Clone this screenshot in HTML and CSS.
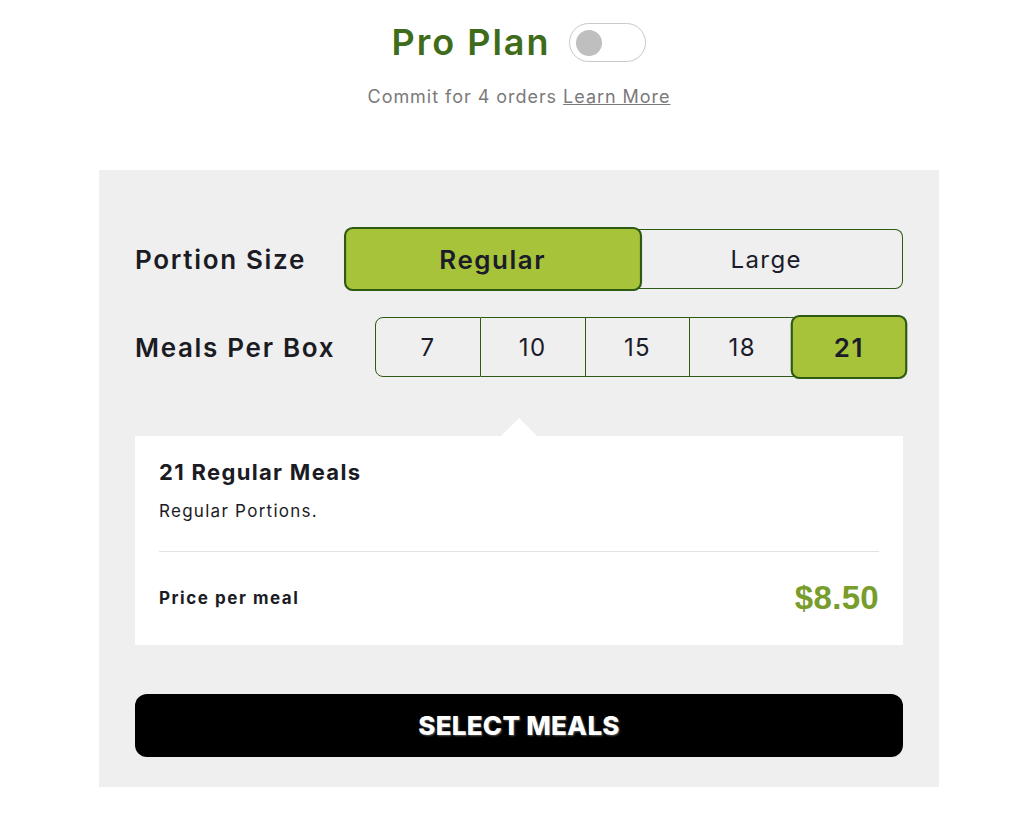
FILE: index.html
```html
<!DOCTYPE html>
<html lang="en">
<head>
  <meta charset="UTF-8">
  <meta name="viewport" content="width=device-width, initial-scale=1">
  <title>Choose Your Plan</title>
  <link rel="stylesheet" href="styles.css">
</head>

<body>

  <div class="cabecera">
    <div class="fila-titulo">
      <h1>Pro Plan</h1>
      <label class="interruptor">
        <input type="checkbox" id="proPlan">
        <span class="bolita"></span>
      </label>
    </div>
    <p class="subtitulo">Commit for 4 orders <a href="#">Learn More</a></p>
  </div>

  <div class="panel">
    <div class="fila">
      <span class="etiqueta">Portion Size</span>
      <div class="grupo grupo-porcion">
        <button class="opcion activa">Regular</button>
        <button class="opcion">Large</button>
      </div>
    </div>

    <div class="fila">
      <span class="etiqueta">Meals Per Box</span>
      <div class="grupo grupo-comidas">
        <button class="opcion">7</button>
        <button class="opcion">10</button>
        <button class="opcion">15</button>
        <button class="opcion">18</button>
        <button class="opcion activa">21</button>
      </div>
    </div>

    <div class="resumen">
      <h2>21 Regular Meals</h2>
      <p class="detalle">Regular Portions.</p>
      <hr>
      <div class="precio">
        <span>Price per meal</span>
        <strong>$8.50</strong>
      </div>
    </div>

    <button class="boton-comidas">SELECT MEALS</button>
  </div>

</body>
</html>
```

FILE: styles.css
```css
body {
  margin: 0;
  padding-left: 4px;
  font-family: 'Inter', 'Liberation Sans', sans-serif;
  letter-spacing: 0.06em;
  background: #ffffff;
  color: #1b1b24;
}

.cabecera {
  padding-top: 22px;
  text-align: center;
}

.fila-titulo {
  display: flex;
  justify-content: center;
  align-items: center;
  gap: 19px;
  height: 40px;
}

h1 {
  margin: 0;
  font-size: 36px;
  font-weight: 600;
  line-height: 40px;
  letter-spacing: 0.055em;
  color: #3f6c1a;
}

.interruptor {
  position: relative;
  display: block;
  width: 75px;
  height: 37px;
  border: 1px solid #c9c9c9;
  border-radius: 20px;
  background: #fff;
  cursor: pointer;
}

.interruptor input {
  display: none;
}

.bolita {
  position: absolute;
  top: 6px;
  left: 6px;
  width: 26px;
  height: 26px;
  border-radius: 50%;
  background: #bfbfbf;
}

.subtitulo {
  margin: 24px 0 0;
  font-size: 18px;
  line-height: 22px;
  color: #7a7a7a;
}

.subtitulo a {
  color: #7a7a7a;
}

.panel {
  width: 768px;
  margin: 62px auto 0;
  padding: 59px 36px 30px;
  background: #efefef;
}

.fila {
  display: flex;
  justify-content: space-between;
  align-items: center;
  margin-bottom: 28px;
}

.etiqueta {
  font-size: 26px;
  font-weight: 600;
  letter-spacing: 0.065em;
}

.grupo {
  display: flex;
  height: 60px;
}

.grupo-porcion {
  width: 548px;
}

.grupo-comidas {
  width: 528px;
}

.opcion {
  flex: 1;
  border: 1px solid #2e5a12;
  border-left: none;
  background: transparent;
  font-family: inherit;
  font-size: 24px;
  letter-spacing: 0.06em;
  color: #1b1b2a;
  cursor: pointer;
}

.opcion:first-child {
  border-left: 1px solid #2e5a12;
  border-radius: 8px 0 0 8px;
}

.opcion:last-child {
  border-radius: 0 8px 8px 0;
}

.opcion.activa {
  position: relative;
  z-index: 1;
  border: 2px solid #2e5a12;
  border-radius: 8px;
  background: #a7c339;
  font-weight: 600;
  transform: scale(1.08, 1.07);
}

.resumen {
  position: relative;
  margin-top: 59px;
  padding: 22px 24px 27px;
  background: #fff;
}

/* flechita que apunta a las opciones */
.resumen::before {
  content: "";
  position: absolute;
  top: -18px;
  left: 50%;
  margin-left: -18px;
  border: 18px solid transparent;
  border-top: none;
  border-bottom-color: #fff;
}

.resumen h2 {
  margin: 0;
  font-size: 22px;
  font-weight: 700;
  line-height: 28px;
  letter-spacing: 0.06em;
}

.detalle {
  margin: 13px 0 0;
  font-size: 17px;
  line-height: 24px;
  letter-spacing: 0.075em;
}

.resumen hr {
  margin: 28px 0 0;
  border: none;
  border-top: 1px solid #e3e3e3;
}

.precio {
  display: flex;
  justify-content: space-between;
  align-items: center;
  height: 40px;
  margin-top: 26px;
  font-size: 17px;
  font-weight: 700;
  letter-spacing: 0.09em;
}

.precio strong {
  font-family: 'Liberation Sans', Arial, sans-serif;
  font-size: 33px;
  letter-spacing: 0.01em;
  color: #789d2c;
}

.boton-comidas {
  display: block;
  width: 100%;
  height: 63px;
  margin-top: 49px;
  border: none;
  border-radius: 12px;
  background: #000;
  color: #fff;
  font-family: inherit;
  font-size: 26px;
  font-weight: 800;
  letter-spacing: 0.01em;
  text-shadow: 1px 1px 2px rgba(255, 255, 255, 0.35);
  cursor: pointer;
}
```
